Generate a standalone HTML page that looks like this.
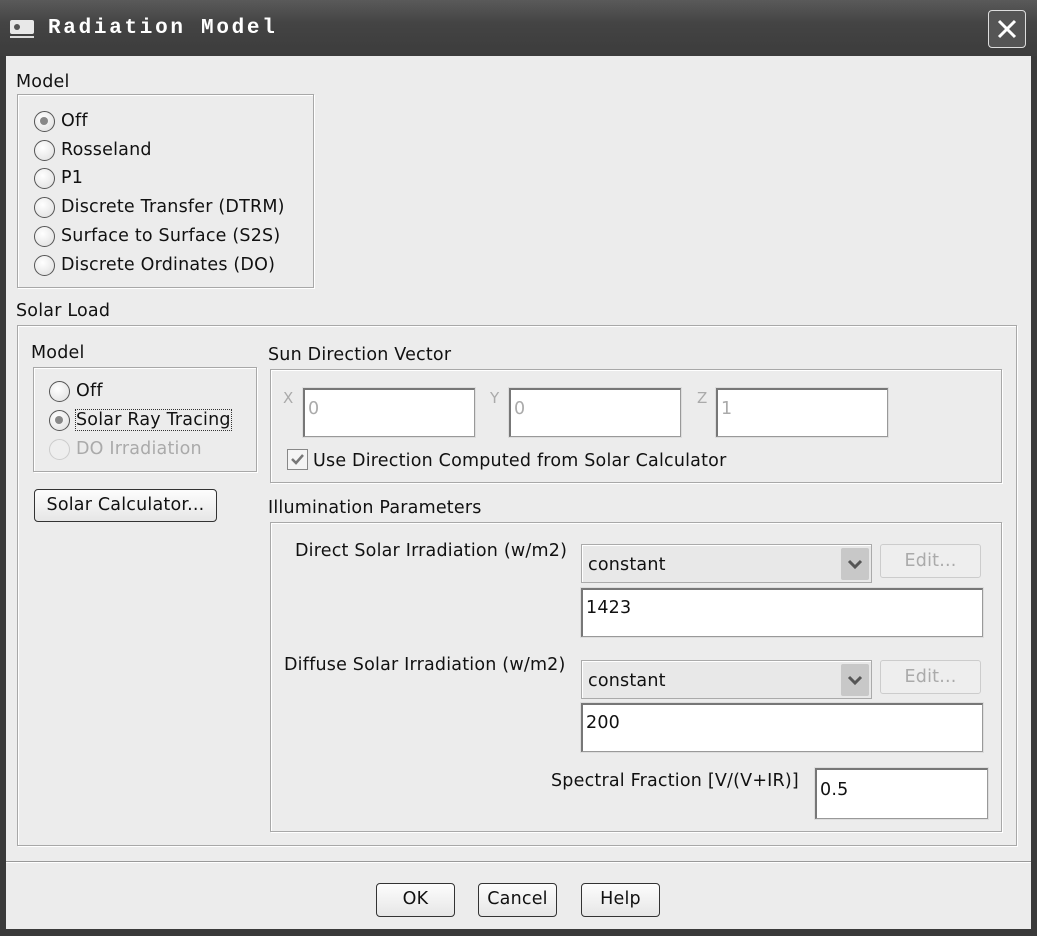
<!DOCTYPE html>
<html><head><meta charset="utf-8"><style>
*{margin:0;padding:0;box-sizing:border-box}
body{width:1037px;height:936px;background:#3a3a3a;position:relative;overflow:hidden;font-family:"DejaVu Sans","Liberation Sans",sans-serif;font-size:17.5px;letter-spacing:0.2px;color:#111}
.a{position:absolute}
#title{left:0;top:0;width:1037px;height:56px;background:linear-gradient(#5a5a5a,#444 40%,#3c3c3c);}
#body{left:6px;top:56px;width:1025px;height:873px;background:#ececec}
.t{position:absolute;white-space:nowrap;line-height:20px}
.box{position:absolute;border:1px solid #a8a8a8;box-shadow:inset 1px 1px 0 #fff,1px 1px 0 #fff}
.r{position:absolute;width:21px;height:21px;border-radius:50%;border:1.5px solid #555;background:radial-gradient(circle at 40% 35%,#fff,#ddd)}
.r.on::after{content:"";position:absolute;left:5px;top:5px;width:8px;height:8px;border-radius:50%;background:#888}
.r.dis{border-color:#ccc;background:#eee}
.f{position:absolute;background:#fff;border:1px solid #999;border-top:2px solid #777;border-left:2px solid #777;box-shadow:0 0 0 1px #ddd}
.f span{position:absolute;left:3px;top:9px;line-height:20px}
.btn{position:absolute;border:1.5px solid #333;border-radius:4px;background:linear-gradient(#fdfdfd,#e6e6e6);text-align:center;line-height:30px}
.combo{position:absolute;background:#e8e8e8;border:1px solid #aaa;box-shadow:inset 1px 1px 0 #fff}
.arr{position:absolute;right:2px;top:3px;width:28px;height:32px;background:#c8c8c8;border-radius:2px}
.edit{position:absolute;border:1px solid #ccc;border-radius:3px;background:#eee;color:#aaa;text-align:center;line-height:32px}
</style></head><body>
<div id="title" class="a"></div>
<div class="a" style="left:10px;top:20px;width:24px;height:14px;background:#e8e8e8;border-radius:2px"></div>
<div class="a" style="left:14px;top:24px;width:6px;height:6px;background:#555;border-radius:50%"></div>
<div class="a" style="left:10px;top:36px;width:24px;height:2px;background:#ddd"></div>
<div class="t" style="left:48px;top:19px;color:#fff;font-family:'Liberation Mono',monospace;font-weight:bold;font-size:21px;letter-spacing:2.7px">Radiation Model</div>
<div class="a" style="left:988px;top:10px;width:38px;height:38px;border:1.5px solid #ddd;border-radius:4px;background:#555"></div>
<svg class="a" style="left:988px;top:10px" width="38" height="38"><path d="M11 11L27 27M27 11L11 27" stroke="#fff" stroke-width="3"/></svg>
<div id="body" class="a"></div>

<div class="t" style="left:16px;top:72px">Model</div>
<div class="box" style="left:17px;top:94px;width:297px;height:194px"></div>
<div class="r on" style="left:34px;top:111px"></div><div class="t" style="left:61px;top:111px">Off</div>
<div class="r" style="left:34px;top:140px"></div><div class="t" style="left:61px;top:140px">Rosseland</div>
<div class="r" style="left:34px;top:168px"></div><div class="t" style="left:61px;top:168px">P1</div>
<div class="r" style="left:34px;top:197px"></div><div class="t" style="left:61px;top:197px">Discrete Transfer (DTRM)</div>
<div class="r" style="left:34px;top:226px"></div><div class="t" style="left:61px;top:226px">Surface to Surface (S2S)</div>
<div class="r" style="left:34px;top:255px"></div><div class="t" style="left:61px;top:255px">Discrete Ordinates (DO)</div>

<div class="t" style="left:16px;top:301px">Solar Load</div>
<div class="box" style="left:17px;top:325px;width:1000px;height:521px"></div>
<div class="t" style="left:31px;top:343px">Model</div>
<div class="box" style="left:33px;top:367px;width:224px;height:105px"></div>
<div class="r" style="left:49px;top:381px"></div><div class="t" style="left:76px;top:381px">Off</div>
<div class="r on" style="left:49px;top:410px"></div><div class="t" style="left:76px;top:410px;outline:1px dotted #333">Solar Ray Tracing</div>
<div class="r dis" style="left:49px;top:439px"></div><div class="t" style="left:76px;top:439px;color:#aaa">DO Irradiation</div>
<div class="btn" style="left:34px;top:489px;width:183px;height:33px">Solar Calculator...</div>

<div class="t" style="left:268px;top:345px">Sun Direction Vector</div>
<div class="box" style="left:270px;top:369px;width:732px;height:114px"></div>
<div class="t" style="left:283px;top:388px;color:#aaa;font-size:15px">X</div>
<div class="f" style="left:303px;top:388px;width:172px;height:49px"><span style="color:#aaa">0</span></div>
<div class="t" style="left:490px;top:388px;color:#aaa;font-size:15px">Y</div>
<div class="f" style="left:509px;top:388px;width:172px;height:49px"><span style="color:#aaa">0</span></div>
<div class="t" style="left:697px;top:388px;color:#aaa;font-size:15px">Z</div>
<div class="f" style="left:716px;top:388px;width:172px;height:49px"><span style="color:#aaa">1</span></div>
<div class="a" style="left:287px;top:449px;width:21px;height:21px;border:1.5px solid #888;background:#f4f4f4"></div>
<svg class="a" style="left:287px;top:449px" width="21" height="21"><path d="M5 10L9 14L16 6" stroke="#777" stroke-width="2.5" fill="none"/></svg>
<div class="t" style="left:313px;top:451px">Use Direction Computed from Solar Calculator</div>

<div class="t" style="left:268px;top:498px">Illumination Parameters</div>
<div class="box" style="left:270px;top:522px;width:732px;height:310px"></div>
<div class="t" style="left:295px;top:541px">Direct Solar Irradiation (w/m2)</div>
<div class="combo" style="left:581px;top:544px;width:291px;height:39px"><div class="t" style="left:6px;top:10px">constant</div><div class="arr"><svg width="28" height="32"><path d="M8 13L14 19L20 13" stroke="#555" stroke-width="3" fill="none"/></svg></div></div>
<div class="edit" style="left:880px;top:544px;width:101px;height:34px">Edit...</div>
<div class="f" style="left:581px;top:588px;width:402px;height:49px"><span style="top:8px">1423</span></div>
<div class="t" style="left:284px;top:655px">Diffuse Solar Irradiation (w/m2)</div>
<div class="combo" style="left:581px;top:660px;width:291px;height:39px"><div class="t" style="left:6px;top:10px">constant</div><div class="arr"><svg width="28" height="32"><path d="M8 13L14 19L20 13" stroke="#555" stroke-width="3" fill="none"/></svg></div></div>
<div class="edit" style="left:880px;top:660px;width:101px;height:34px">Edit...</div>
<div class="f" style="left:581px;top:703px;width:402px;height:49px"><span style="top:8px">200</span></div>
<div class="t" style="left:551px;top:771px">Spectral Fraction [V/(V+IR)]</div>
<div class="f" style="left:815px;top:768px;width:173px;height:51px"><span style="top:10px">0.5</span></div>

<div class="a" style="left:6px;top:861px;width:1025px;height:1px;background:#999"></div>
<div class="a" style="left:6px;top:862px;width:1025px;height:1px;background:#fff"></div>
<div class="btn" style="left:376px;top:883px;width:79px;height:34px">OK</div>
<div class="btn" style="left:478px;top:883px;width:79px;height:34px">Cancel</div>
<div class="btn" style="left:581px;top:883px;width:79px;height:34px">Help</div>
</body></html>
